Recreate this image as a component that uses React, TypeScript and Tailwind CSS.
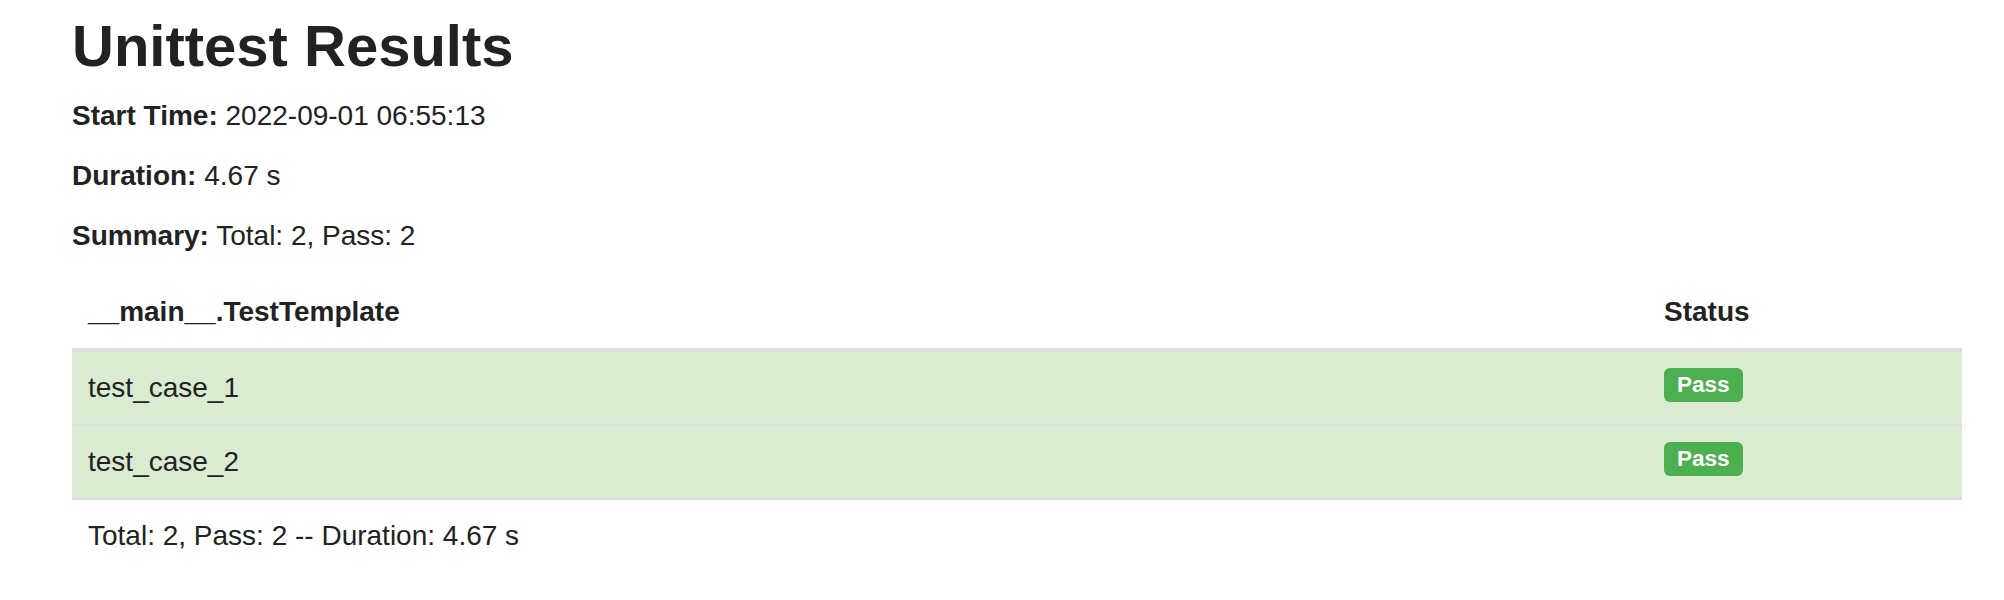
import React from "react";

const tests = [
  { name: "test_case_1", status: "Pass" },
  { name: "test_case_2", status: "Pass" },
];

const App = () => {
  return (
    <div className="min-h-[600px] bg-white px-[72px] pt-[14px] font-['Liberation_Sans',Arial,sans-serif] text-[#222]">
      <h1 className="text-[58px] leading-[64px] font-bold mb-[18px]">Unittest Results</h1>
      <p className="text-[28px] leading-[40px] mb-[20px]">
        <strong>Start Time:</strong> 2022-09-01 06:55:13
      </p>
      <p className="text-[28px] leading-[40px] mb-[20px]">
        <strong>Duration:</strong> 4.67 s
      </p>
      <p className="text-[28px] leading-[40px] mb-[20px]">
        <strong>Summary:</strong> Total: 2, Pass: 2
      </p>
      <table className="w-[1890px] table-fixed border-collapse text-[28px] leading-[40px]">
        <colgroup>
          <col className="w-[1576px]" />
          <col className="w-[314px]" />
        </colgroup>
        <thead>
          <tr>
            <th className="p-4 text-left font-bold border-b-4 border-[#ddd]">__main__.TestTemplate</th>
            <th className="p-4 text-left font-bold border-b-4 border-[#ddd]">Status</th>
          </tr>
        </thead>
        <tbody>
          {tests.map((t) => (
            <tr key={t.name} className="bg-[#d9ecd2]">
              <td className="p-4 align-top border-b-2 border-[#ddd]">{t.name}</td>
              <td className="p-4 align-top border-b-2 border-[#ddd]">
                <span className="inline-block align-top h-[34px] px-[13px] rounded-[6px] bg-[#4caf50] text-white font-bold text-[22.5px] leading-[34px]">
                  {t.status}
                </span>
              </td>
            </tr>
          ))}
        </tbody>
        <tfoot>
          <tr>
            <td colSpan={2} className="p-4">
              Total: 2, Pass: 2 -- Duration: 4.67 s
            </td>
          </tr>
        </tfoot>
      </table>
    </div>
  );
};

export default App;
